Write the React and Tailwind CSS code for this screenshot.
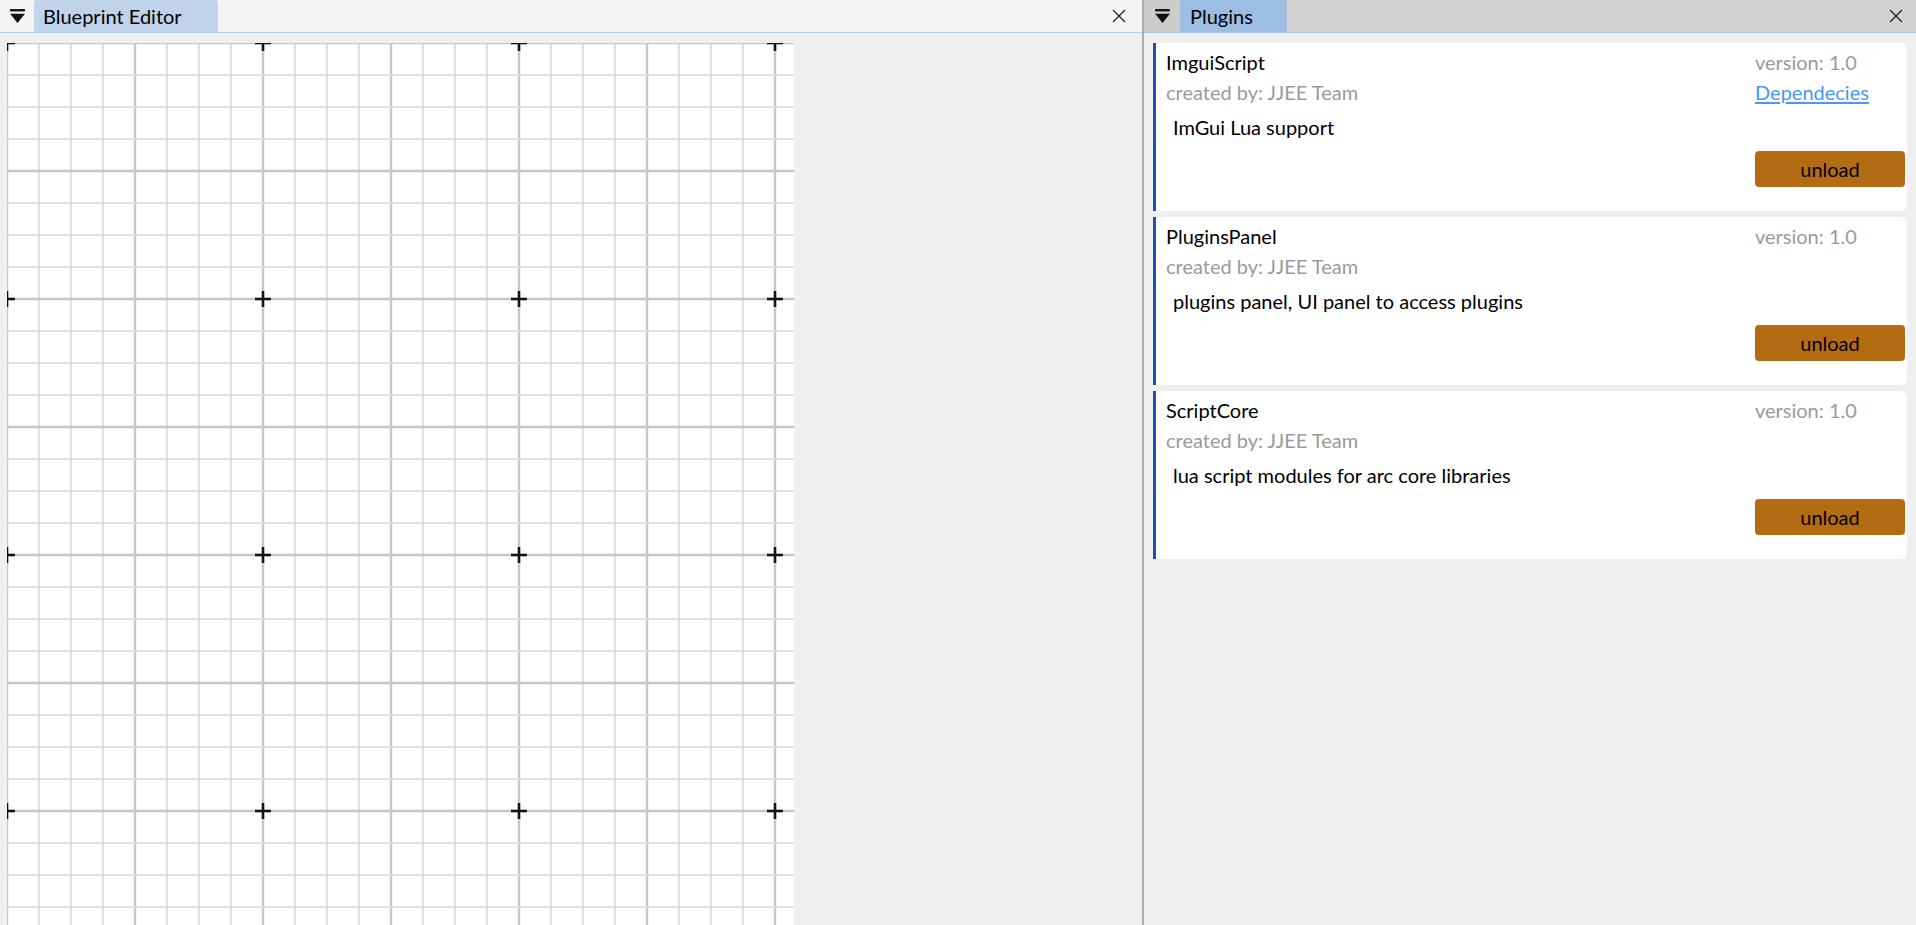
import React from 'react';

const plugins = [
  { name: 'ImguiScript', author: 'JJEE Team', version: '1.0', desc: 'ImGui Lua support', deps: true },
  { name: 'PluginsPanel', author: 'JJEE Team', version: '1.0', desc: 'plugins panel, UI panel to access plugins', deps: false },
  { name: 'ScriptCore', author: 'JJEE Team', version: '1.0', desc: 'lua script modules for arc core libraries', deps: false },
];

function MenuIcon() {
  return (
    <svg width="17" height="17" viewBox="0 0 16 16">
      <rect x="1" y="1" width="14" height="2.2" fill="#111" />
      <polygon points="1,5.5 15,5.5 8,14" fill="#111" />
    </svg>
  );
}

function CloseIcon() {
  return (
    <svg width="16" height="16" viewBox="0 0 16 16">
      <path d="M2 2 L14 14 M14 2 L2 14" stroke="#222" strokeWidth="1.3" />
    </svg>
  );
}

function Grid({ width, height }) {
  const step = 32;
  const lines = [];
  for (let i = 0; i * step <= width; i++) {
    const x = i * step;
    const major = i % 4 === 0;
    lines.push(
      <line key={'v' + i} x1={x} y1={0} x2={x} y2={height}
        stroke={major ? '#c6c6c6' : '#d6d6d6'} strokeWidth={major ? 2.5 : 1.5} />
    );
  }
  for (let j = 0; j * step <= height; j++) {
    const y = j * step;
    const major = j % 4 === 0;
    lines.push(
      <line key={'h' + j} x1={0} y1={y} x2={width} y2={y}
        stroke={major ? '#c6c6c6' : '#d6d6d6'} strokeWidth={major ? 2.5 : 1.5} />
    );
  }
  const crosses = [];
  for (let i = 0; i * 256 <= width; i++) {
    for (let j = 0; j * 256 <= height; j++) {
      const x = i * 256, y = j * 256;
      crosses.push(
        <path key={`c${i}-${j}`} d={`M${x - 8} ${y} H${x + 8} M${x} ${y - 8} V${y + 8}`}
          stroke="#111" strokeWidth="2.5" />
      );
    }
  }
  return (
    <svg width={width} height={height} className="block bg-white">
      {lines}
      {crosses}
    </svg>
  );
}

function PluginCard({ p }) {
  return (
    <div className="flex h-[168px] rounded-r-md bg-white border-l-[3px] border-[#1f4fb0]">
      <div className="flex-1 pl-[10px] pt-[4px]">
        <div className="text-[20px] leading-[30px] text-black">{p.name}</div>
        <div className="text-[20px] leading-[30px] text-[#9a9a9a]">created by: {p.author}</div>
        <div className="pl-[7px] pt-[5px] text-[20px] leading-[30px] text-black">{p.desc}</div>
      </div>
      <div className="flex w-[152px] flex-col pt-[4px]">
        <div className="text-[20px] leading-[30px] text-[#9a9a9a]">version: {p.version}</div>
        <div className="h-[30px] text-[20px] leading-[30px]">
          {p.deps && <span className="text-[#4a97f0] underline underline-offset-2">Dependecies</span>}
        </div>
        <button className="mt-[44px] h-[36px] w-[150px] rounded-[4px] bg-[#b36c14] text-[20px] text-black">
          unload
        </button>
      </div>
    </div>
  );
}

export default function App() {
  return (
    <div className="flex h-[925px] w-[1916px] overflow-hidden bg-[#efefef] font-['Lato','Noto_Sans',sans-serif]">
      <div className="flex w-[1142px] flex-col">
        <div className="flex h-[33px] items-stretch border-b border-[#b3cdec] bg-[#f4f4f4]">
          <div className="flex w-[34px] items-center justify-center"><MenuIcon /></div>
          <div className="flex w-[184px] items-center rounded-t-[3px] bg-[#bfd3ea] pl-[9px] text-[20px] text-black">
            Blueprint Editor
          </div>
          <div className="flex-1" />
          <div className="flex w-[46px] items-center justify-center"><CloseIcon /></div>
        </div>
        <div className="flex-1 overflow-hidden pl-[7px] pt-[10px]">
          <Grid width={787} height={882} />
        </div>
      </div>
      <div className="w-[2px] bg-[#adadad]" />
      <div className="flex flex-1 flex-col">
        <div className="flex h-[33px] items-stretch border-b border-[#a3c3ea] bg-[#d3d3d3]">
          <div className="flex w-[36px] items-center justify-center bg-[#cccccc]"><MenuIcon /></div>
          <div className="flex w-[107px] items-center rounded-t-[3px] bg-[#9dbde2] pl-[10px] text-[20px] text-black">
            Plugins
          </div>
          <div className="flex-1" />
          <div className="flex w-[40px] items-center justify-center"><CloseIcon /></div>
        </div>
        <div className="flex flex-col gap-[6px] pl-[9px] pr-[9px] pt-[10px]">
          {plugins.map(p => <PluginCard key={p.name} p={p} />)}
        </div>
      </div>
    </div>
  );
}
